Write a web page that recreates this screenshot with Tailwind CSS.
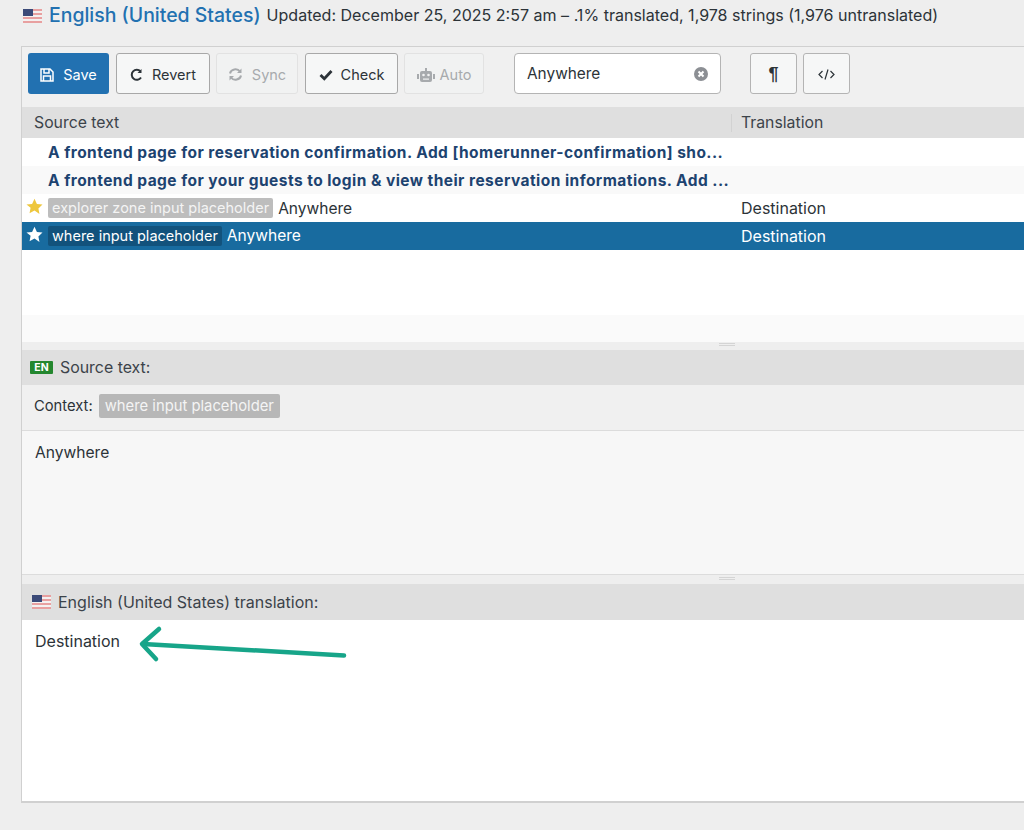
<!DOCTYPE html>
<html lang="en">
<head>
<meta charset="UTF-8">
<script src="https://cdn.jsdelivr.net/npm/@tailwindcss/browser@4"></script>
</head>
<body class="bg-[#eeeeee] text-[#3c434a] font-['Inter',sans-serif] h-[830px] w-[1024px] overflow-hidden relative">

<!-- title line -->
<div class="h-[46px] pl-[23px] pt-[1px] flex items-center gap-[6px] pb-[16px] whitespace-nowrap">
  <svg class="w-[19px] h-[14px] mr-[1px]" viewBox="0 0 19 14">
    <rect width="19" height="14" fill="#e8a0a0"/>
    <rect y="2" width="19" height="2" fill="#f4f0f0"/><rect y="6" width="19" height="2" fill="#f4f0f0"/><rect y="10" width="19" height="2" fill="#f4f0f0"/>
    <rect width="10" height="7" fill="#3b4a78"/>
  </svg>
  <span class="text-[19.450px] font-medium text-[#2271b1]">English (United States)</span>
  <span class="text-[16.050px] text-[#2c3338]">Updated: December 25, 2025 2:57 am – .1% translated, 1,978 strings (1,976 untranslated)</span>
</div>

<div class="ml-[21px] h-[757px] border-l border-t border-b-2 border-[#d0d0d0] flex flex-col">
  <!-- toolbar -->
  <div class="h-[60px] shrink-0 bg-[#f0f0f0] pl-[6px] pt-[6px] flex items-start text-[14.500px]">
    <button class="w-[81px] h-[41px] pt-[2px] rounded-[3px] bg-[#2271b1] text-white flex items-center justify-center gap-[9px]">
      <svg class="w-[14px] h-[14px]" viewBox="0 0 14 14" fill="none" stroke="#fff" stroke-width="1.5"><path d="M1 1h9l3 3v9H1z"/><path d="M4 1v4h5V1M3.500 13V8h7v5"/></svg>Save
    </button>
    <button class="ml-[7px] w-[94px] h-[41px] pt-[2px] rounded-[3px] border border-[#a8a8a8] bg-[#f6f7f7] flex items-center justify-center gap-[9px] text-[#2c3338]">
      <svg class="w-[13px] h-[13px]" viewBox="0 0 13 13" fill="none" stroke="#2c3338" stroke-width="2"><path d="M11 9.500A5 5 0 1 1 10.500 3.500"/><path d="M11.500 1v4h-4z" fill="#2c3338" stroke="none"/></svg>Revert
    </button>
    <button class="ml-[6px] w-[82px] h-[41px] pt-[2px] rounded-[3px] border border-[#e2e2e2] bg-[#f1f2f2] flex items-center justify-center gap-[9px] text-[#a7aaad]">
      <svg class="w-[15px] h-[13px]" viewBox="0 0 15 13" fill="none" stroke="#a7aaad" stroke-width="2"><path d="M2 5.500A5.500 5 0 0 1 12 3.500M13 7.500A5.500 5 0 0 1 3 9.500"/><path d="M13.500 .5v4.500H9z" fill="#a7aaad" stroke="none"/><path d="M1.500 12.500V8H6z" fill="#a7aaad" stroke="none"/></svg>Sync
    </button>
    <button class="ml-[7px] w-[93px] h-[41px] pt-[2px] rounded-[3px] border border-[#a8a8a8] bg-[#f6f7f7] flex items-center justify-center gap-[8px] text-[#2c3338]">
      <svg class="w-[14px] h-[12px]" viewBox="0 0 14 12" fill="none" stroke="#2c3338" stroke-width="2.800"><path d="M1.500 6l3.800 3.800L12.500 2"/></svg>Check
    </button>
    <button class="ml-[6px] w-[80px] h-[41px] pt-[2px] rounded-[3px] border border-[#e2e2e2] bg-[#f1f2f2] flex items-center justify-center gap-[5px] text-[#a7aaad]">
      <svg class="w-[18px] h-[14px]" viewBox="0 0 18 14" fill="#a7aaad"><rect x="3" y="3" width="12" height="11" rx="2"/><rect x="8" y="0" width="2" height="3"/><rect x="0" y="6" width="2" height="5"/><rect x="16" y="6" width="2" height="5"/><circle cx="6.500" cy="7" r="1.300" fill="#f1f2f2"/><circle cx="11.500" cy="7" r="1.300" fill="#f1f2f2"/><rect x="6" y="10.500" width="6" height="1.200" fill="#f1f2f2"/></svg>Auto
    </button>
    <div class="ml-[30px] w-[207px] h-[41px] rounded-[4px] border border-[#b4b4b4] bg-white flex items-center justify-between pl-[12px] pr-[12px] text-[15.400px] text-[#2c3338]">
      <span>Anywhere</span>
      <svg class="w-[14px] h-[14px]" viewBox="0 0 14 14"><circle cx="7" cy="7" r="7" fill="#8c8f94"/><path d="M4.500 4.500l5 5M9.500 4.500l-5 5" stroke="#fff" stroke-width="2"/></svg>
    </div>
    <button class="ml-[29px] w-[47px] h-[41px] pt-[1px] rounded-[3px] border border-[#b4b4b4] bg-[#f6f7f7] flex items-center justify-center text-[18px] font-bold text-[#2c3338] font-['Liberation_Sans',sans-serif]">¶</button>
    <button class="ml-[6px] w-[47px] h-[41px] pt-[1px] rounded-[3px] border border-[#b4b4b4] bg-[#f6f7f7] flex items-center justify-center">
      <svg class="w-[17px] h-[11px]" viewBox="0 0 17 11" fill="none" stroke="#2c3338" stroke-width="1.200"><path d="M4.500 2L1 5.500 4.500 9M12.500 2L16 5.500 12.500 9M10 .5L7 10.500"/></svg>
    </button>
  </div>

  <!-- list header -->
  <div class="h-[31px] shrink-0 bg-[#dfdfdf] flex items-center text-[15.800px]">
    <div class="w-[709px] pl-[12px] h-full flex items-center">Source text</div>
    <div class="h-[18px] border-l border-[#d2d2d2] pl-[9px] flex items-center">Translation</div>
  </div>

  <!-- rows -->
  <div class="h-[204px] shrink-0 bg-white text-[15.550px] text-[#2c3338]">
    <div class="h-[28px] pl-[26px] pt-[2px] flex items-center font-bold text-[15.500px] tracking-[0.450px] text-[#1d4370] whitespace-nowrap">A frontend page for reservation confirmation. Add [homerunner-confirmation] sho...</div>
    <div class="h-[28px] pl-[26px] pt-[2px] flex items-center font-bold text-[15.500px] tracking-[0.450px] text-[#1d4370] whitespace-nowrap bg-[#f9f9f9]">A frontend page for your guests to login &amp; view their reservation informations. Add ...</div>
    <div class="h-[28px] flex items-center whitespace-nowrap relative">
      <svg class="w-[17px] h-[17px] ml-[4px] mr-[5px] mb-[3px]" viewBox="0 0 24 24" fill="#eec73d"><path d="M12 1l3.400 7.300 7.900 1-5.800 5.500 1.500 7.900L12 17.800l-7 3.900 1.500-7.900L.7 9.300l7.900-1z"/></svg>
      <span class="bg-[#bdbdbd] text-[#f4f4f4] text-[14.500px] rounded-[2px] px-[4px] h-[20px] mb-[1px] flex items-center mr-[5px]">explorer zone input placeholder</span><span class="pt-[1px]">Anywhere</span>
      <span class="absolute left-[719px] text-[16px]">Destination</span>
    </div>
    <div class="h-[28px] flex items-center whitespace-nowrap bg-[#186b9f] text-white relative">
      <svg class="w-[17px] h-[17px] ml-[4px] mr-[5px] mb-[3px]" viewBox="0 0 24 24" fill="#fff"><path d="M12 1l3.400 7.300 7.900 1-5.800 5.500 1.500 7.900L12 17.800l-7 3.900 1.500-7.900L.7 9.300l7.900-1z"/></svg>
      <span class="bg-[#12527c] text-[14.500px] rounded-[2px] px-[4px] h-[20px] mb-[1px] flex items-center mr-[5px]">where input placeholder</span>Anywhere
      <span class="absolute left-[719px] text-[16px]">Destination</span>
    </div>
    <div class="h-[65px]"></div>
    <div class="h-[27px] bg-[#fafafa]"></div>
  </div>

  <!-- splitter -->
  <div class="h-[8px] shrink-0 bg-[#eeeeee] flex justify-center pt-[1px] pl-[408px]"><div class="w-[16px] h-[3px] border-y border-[#d4d4d4]"></div></div>

  <!-- source panel -->
  <div class="h-[35px] shrink-0 bg-[#dfdfdf] flex items-center pl-[8px] gap-[7px] text-[15.900px]">
    <span class="bg-[#24872f] text-white text-[10.500px] font-bold rounded-[1px] w-[23px] text-center h-[13px] leading-[13px]">EN</span>
    <span>Source text:</span>
  </div>
  <div class="h-[46px] shrink-0 bg-[#f0f0f0] border-b border-[#dcdcdc] flex items-center pl-[12px] pb-[3px] gap-[6px] text-[14.750px] text-[#2c3338]">
    <span>Context:</span>
    <span class="bg-[#b7b7b7] text-[#f4f4f4] text-[14.800px] rounded-[2px] px-[6px] h-[24px] flex items-center">where input placeholder</span>
  </div>
  <div class="h-[143px] shrink-0 bg-[#f7f7f7] pl-[13px] pt-[10px] text-[15.600px] text-[#2c3338]">Anywhere</div>

  <!-- splitter -->
  <div class="h-[10px] shrink-0 bg-[#eeeeee] border-t border-[#dcdcdc] flex justify-center pt-[2px] pl-[408px]"><div class="w-[16px] h-[3px] border-y border-[#d4d4d4]"></div></div>

  <!-- translation panel -->
  <div class="h-[36px] shrink-0 bg-[#dfdfdf] flex items-center pl-[10px] pb-[1px] gap-[7px] text-[16px]">
    <svg class="w-[19px] h-[14px]" viewBox="0 0 19 14">
      <rect width="19" height="14" fill="#e8a0a0"/>
      <rect y="2" width="19" height="2" fill="#f4f0f0"/><rect y="6" width="19" height="2" fill="#f4f0f0"/><rect y="10" width="19" height="2" fill="#f4f0f0"/>
      <rect width="10" height="7" fill="#3b4a78"/>
    </svg>
    <span>English (United States) translation:</span>
  </div>
  <div class="flex-1 bg-white pl-[13px] pt-[9px] text-[16px] text-[#2c3338]">Destination</div>
</div>

<!-- annotation arrow -->
<svg class="absolute left-[130px] top-[620px]" width="225" height="50" viewBox="0 0 225 50" fill="none" stroke="#17a589" stroke-width="4.500" stroke-linecap="round" stroke-linejoin="round">
  <path d="M214 35.500L13 24"/><path d="M29 9L12 24l14 15"/>
</svg>
</body>
</html>
